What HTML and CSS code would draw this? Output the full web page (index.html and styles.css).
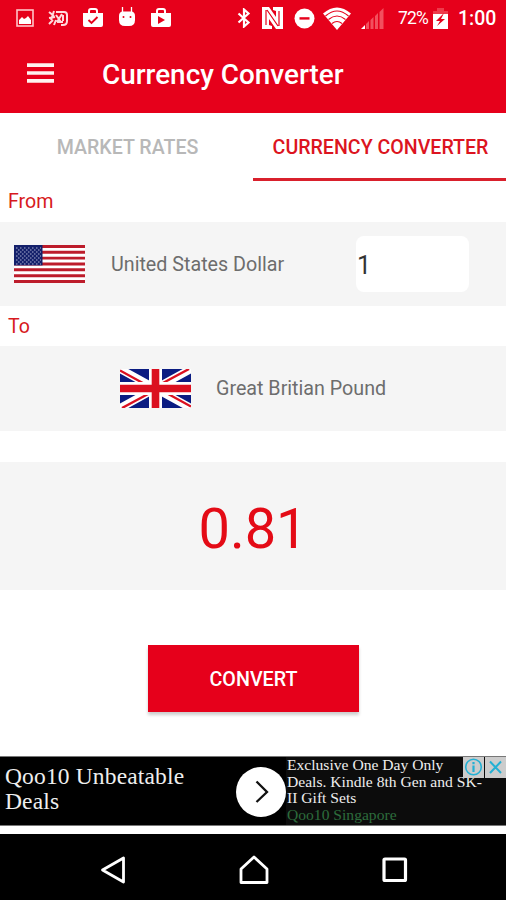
FILE: index.html
```html
<!DOCTYPE html>
<html lang="en">
<head>
  <meta charset="UTF-8">
  <meta name="viewport" content="width=device-width, initial-scale=1.0">
  <title>Currency Converter</title>
  <link rel="stylesheet" href="styles.css">
</head>
<body>
  <header class="app-header">
    <div class="status-bar">
      <div class="status-left">
        <svg width="18" height="18" viewBox="0 0 18 18"><rect x="1" y="1" width="16" height="16" fill="none" stroke="#ffc4c8" stroke-width="1.6"/><path d="M3 15v-4l3-3 2 2 2-1 2-2 3 4v4z" fill="#fff"/></svg>
        <svg width="20" height="18" viewBox="0 0 20 18" fill="none" stroke="#ffdadd" stroke-width="2"><path d="M1 3l5 4M6 2L3 11M1 9l6-1M1 15l4-4M6 16l2-5M8 3h8q3 0 3 3v6q0 4-4 4h-2M8 6l5 7M14 5l-5 8M9 13h6M15 6v6"/></svg>
        <svg width="22" height="20" viewBox="0 0 22 20"><path d="M7 5V3q0-2 2-2h4q2 0 2 2v2" fill="none" stroke="#fff" stroke-width="2"/><path d="M1 5h20v12q0 2-2 2H3q-2 0-2-2z" fill="#fff"/><path d="M6.500 12l3 3 6-6" fill="none" stroke="#e6001b" stroke-width="1.900"/></svg>
        <svg width="18" height="21" viewBox="0 0 18 21"><path d="M4.500 0v6M13.500 0v6" stroke="#fff" stroke-width="1.300"/><path d="M1 9q0-4.500 4-4.500h8q4 0 4 4.500v4q0 6-6 6H7q-6 0-6-6z" fill="#fff"/><circle cx="5.500" cy="10" r="1" fill="#e6001b"/><circle cx="12.500" cy="10" r="1" fill="#e6001b"/></svg>
        <svg width="22" height="20" viewBox="0 0 22 20"><path d="M7 5V3q0-2 2-2h4q2 0 2 2v2" fill="none" stroke="#fff" stroke-width="2"/><path d="M1 5h20v12q0 2-2 2H3q-2 0-2-2z" fill="#fff"/><path d="M8 8l7 4-7 4z" fill="#e6001b"/></svg>
      </div>
      <div class="status-right">
        <svg width="14" height="20" viewBox="0 0 14 20"><path d="M1.500 5.500l10 9L7 18.500v-17l4.500 4-10 9" fill="none" stroke="#fff" stroke-width="2.200"/></svg>
        <svg width="23" height="24" viewBox="0 0 23 24"><path d="M1 1h7l7 10V5l-3-1V1h10v22h-7L8 13v6l3 1v3H1z" fill="#fff"/><path d="M5 4v15M6 4l11 16M18 5v15" fill="none" stroke="#e6001b" stroke-width="1.200"/></svg>
        <svg width="21" height="21" viewBox="0 0 21 21"><circle cx="10.500" cy="10.500" r="10" fill="#fff"/><rect x="5.500" y="9.200" width="10" height="2.400" fill="#e6001b"/></svg>
        <svg class="wifi" width="28" height="23" viewBox="0 0 28 23"><path d="M0 6.500Q14-5.500 28 6.500L14 23z" fill="#fff"/><path d="M2.500 9Q14-1 25.500 9M5.500 12.500q8.500-7 17 0M9 16.500q5-4 10 0" fill="none" stroke="#e6001b" stroke-width="1.100"/></svg>
        <svg width="23" height="21" viewBox="0 0 23 21"><path d="M0 21l4-4v4z" fill="#fff"/><path d="M5 21v-5l3-3v8zM9.500 21v-9l3-3v12zM14 21V8l3-3v16zM18.500 21V4l4-4v21z" fill="#f2505e"/></svg>
        <span class="battery-level">72%</span>
        <svg width="15" height="21" viewBox="0 0 15 21"><path d="M4 0h7v3h4v3H0V3h4z" fill="#ee3a4b"/><path d="M0 6h15v15H0z" fill="#fff"/><path d="M11 5l-8 8h4l-3 5 8-7H8z" fill="#e6001b"/></svg>
        <span class="clock">1:00</span>
      </div>
    </div>
    <div class="title-bar">
      <svg class="menu-icon" width="27" height="20" viewBox="0 0 27 20"><path d="M0 2.200h27M0 10h27M0 17.800h27" stroke="#fff2f0" stroke-width="3.700"/></svg>
      <h1>Currency Converter</h1>
    </div>
  </header>

  <nav class="tabs">
    <a class="tab"><span>MARKET RATES</span></a>
    <a class="tab active"><span>CURRENCY CONVERTER</span></a>
  </nav>

  <main>
    <h2 class="label">From</h2>
    <section class="row from-row">
      <svg class="flag" width="71" height="38" viewBox="0 0 71 38">
        <rect width="71" height="38" fill="#fff"/>
        <path d="M0 1.500h71M0 7.300h71M0 13.100h71M0 19h71M0 24.800h71M0 30.700h71M0 36.500h71" stroke="#bd1c2b" stroke-width="2.900"/>
        <rect width="28.500" height="20.400" fill="#14206b"/>
        <path d="M2 3h25M2 7h25M2 11h25M2 15h25M2 19h25" stroke="#a9aed0" stroke-width="1.200" stroke-dasharray="1.500 2.500"/>
        <path d="M4 5h23M4 9h23M4 13h23M4 17h23" stroke="#a9aed0" stroke-width="1.200" stroke-dasharray="1.500 2.500"/>
      </svg>
      <span class="currency">United States Dollar</span>
      <input class="amount" type="text" value="1">
    </section>
    <h2 class="label to-label">To</h2>
    <section class="row to-row">
      <svg class="flag" width="71" height="39" viewBox="0 0 71 39">
        <rect width="71" height="39" fill="#0b1c82"/>
        <path d="M0 0l71 39M71 0L0 39" stroke="#fff" stroke-width="8"/>
        <path d="M0 1.500l35.500 19.500M71 37.500L35.500 18M69 0L35.500 18M2 39l33.500-18" stroke="#db1020" stroke-width="2.400"/>
        <path d="M35.500 0v39M0 19.500h71" stroke="#fff" stroke-width="13"/>
        <path d="M35.500 0v39M0 19.500h71" stroke="#db1020" stroke-width="7.600"/>
      </svg>
      <span class="currency pound">Great Britian Pound</span>
    </section>
    <section class="result"><span>0.81</span></section>
    <button class="convert"><span>CONVERT</span></button>
  </main>

  <aside class="ad">
    <div class="ad-title">Qoo10 Unbeatable<br>Deals</div>
    <div class="ad-arrow">
      <svg width="50" height="50" viewBox="0 0 50 50"><circle cx="25" cy="25" r="25" fill="#fff"/><path d="M20.500 14.500L31 25 20.500 35" fill="none" stroke="#111" stroke-width="2.300"/></svg>
    </div>
    <div class="ad-copy">
      <span>Exclusive One Day Only</span><br>
      <span>Deals. Kindle 8th Gen and SK-</span><br>
      <span>II Gift Sets</span><br>
      <span class="advertiser">Qoo10 Singapore</span>
    </div>
    <div class="ad-badge">
      <svg width="21" height="21" viewBox="0 0 21 21"><rect width="21" height="21" fill="#ccc"/><circle cx="10.500" cy="10" r="7.800" fill="none" stroke="#24b0d4" stroke-width="1.600"/><path d="M10.500 5v2.200M10.500 8.500v6.500" stroke="#24b0d4" stroke-width="2.200"/></svg>
      <svg width="21" height="21" viewBox="0 0 21 21"><rect width="21" height="21" fill="#ccc"/><path d="M5 4.500l11 11.500M16 4.500L5 16" stroke="#24b0d4" stroke-width="2"/></svg>
    </div>
  </aside>

  <footer class="nav-bar">
    <svg width="26" height="28" viewBox="0 0 26 28"><path d="M23.500 2v24L2.500 14z" fill="none" stroke="#fff" stroke-width="2.800" stroke-linejoin="round"/></svg>
    <svg width="30" height="30" viewBox="0 0 30 30"><path d="M2 27.500V14L15 2l13 12v13.500z" fill="none" stroke="#fff" stroke-width="2.800" stroke-linejoin="round"/></svg>
    <svg width="26" height="26" viewBox="0 0 26 26"><rect x="2" y="2" width="21.500" height="21.500" rx="1" fill="none" stroke="#fff" stroke-width="3.200"/></svg>
  </footer>
</body>
</html>
```
FILE: styles.css
```css
* {
  box-sizing: border-box;
}

body {
  margin: 0;
  width: 506px;
  height: 900px;
  overflow: hidden;
  background: #fff;
  font-family: Roboto, sans-serif;
}

svg {
  display: block;
  flex-shrink: 0;
}

h1, h2 {
  margin: 0;
  font-weight: 400;
}

span {
  white-space: nowrap;
}

.app-header {
  height: 113px;
  background: #e6001b;
  color: #fff;
}

.status-bar {
  height: 36px;
  display: flex;
  justify-content: space-between;
  padding: 0 11px 0 16px;
}

.status-left, .status-right {
  display: flex;
  align-items: center;
}

.status-left {
  gap: 14px;
  padding-bottom: 1px;
}

.status-right {
  gap: 10px;
}

.wifi {
  margin-left: -2px;
}

.battery-level {
  width: 32px;
  font-size: 17.5px;
  letter-spacing: -0.8px;
  margin: 0 -7px 0 4px;
}

.clock {
  width: 37px;
  font-size: 19.5px;
  font-weight: 500;
}

.title-bar {
  height: 77px;
  display: flex;
  align-items: center;
  padding-left: 27px;
}

.menu-icon {
  margin-bottom: 3px;
}

.title-bar h1 {
  margin-left: 48px;
  font-size: 27.9px;
  font-weight: 500;
}

.tabs {
  height: 68px;
  display: grid;
  grid-template-columns: 253px 253px;
}

.tab {
  display: flex;
  align-items: center;
  justify-content: center;
  padding: 4px 0 0 2px;
  font-size: 19.6px;
  font-weight: 500;
  color: #b8b8b8;
  border-bottom: 3px solid transparent;
}

.tab.active {
  color: #dc1420;
  border-color: #d9202c;
}

.label {
  padding-left: 8px;
  font-size: 19.6px;
  line-height: 42px;
  height: 41px;
  color: #d71920;
}

.to-label {
  height: 40px;
}

.row {
  height: 84px;
  display: flex;
  align-items: center;
  background: #f5f5f5;
}

.from-row {
  padding-left: 14px;
}

.to-row {
  height: 85px;
  padding-left: 120px;
}

.currency {
  width: 245px;
  margin-left: 26px;
  font-size: 19.7px;
  color: #6d6d6d;
}

.pound {
  margin-left: 25px;
}

.amount {
  width: 113px;
  height: 56px;
  padding: 2px 0 0 1px;
  border: 0;
  border-radius: 8px;
  background: #fff;
  font-family: Roboto, sans-serif;
  font-size: 25px;
  color: #333;
}

.result {
  height: 128px;
  margin-top: 31px;
  display: flex;
  align-items: center;
  justify-content: center;
  padding-top: 6px;
  background: #f5f5f5;
  font-size: 56px;
  color: #e40b16;
}

.convert {
  display: block;
  width: 211px;
  height: 67px;
  margin: 55px auto 0 148px;
  padding: 1px 0 0;
  border: 0;
  background: #e6001b;
  box-shadow: 0 3px 3px rgba(0, 0, 0, 0.2);
  font-family: Roboto, sans-serif;
  font-size: 19.7px;
  font-weight: 500;
  color: #fff;
}

.ad {
  position: relative;
  height: 70px;
  margin-top: 44px;
  display: flex;
  background: #000;
  border-top: 1px solid #777;
  border-bottom: 1px solid #777;
  color: #eee;
  font-family: "Liberation Serif", serif;
}

.ad-title {
  width: 236px;
  padding: 7px 0 0 5px;
  font-size: 23.5px;
  line-height: 25px;
  letter-spacing: 0.15px;
}

.ad-arrow {
  width: 50px;
  padding-top: 10px;
}

.ad-copy {
  flex: 1;
  padding-left: 1px;
  background: #0c0c0c;
  font-size: 15.6px;
  line-height: 16.7px;
}

.advertiser {
  color: #2d6c3c;
}

.ad-badge {
  position: absolute;
  top: 0;
  right: 0;
  display: flex;
  gap: 1px;
}

.nav-bar {
  height: 67px;
  margin-top: 8px;
  display: flex;
  align-items: center;
  justify-content: space-between;
  padding: 5px 98px 0 100px;
  background: #000;
}
```
